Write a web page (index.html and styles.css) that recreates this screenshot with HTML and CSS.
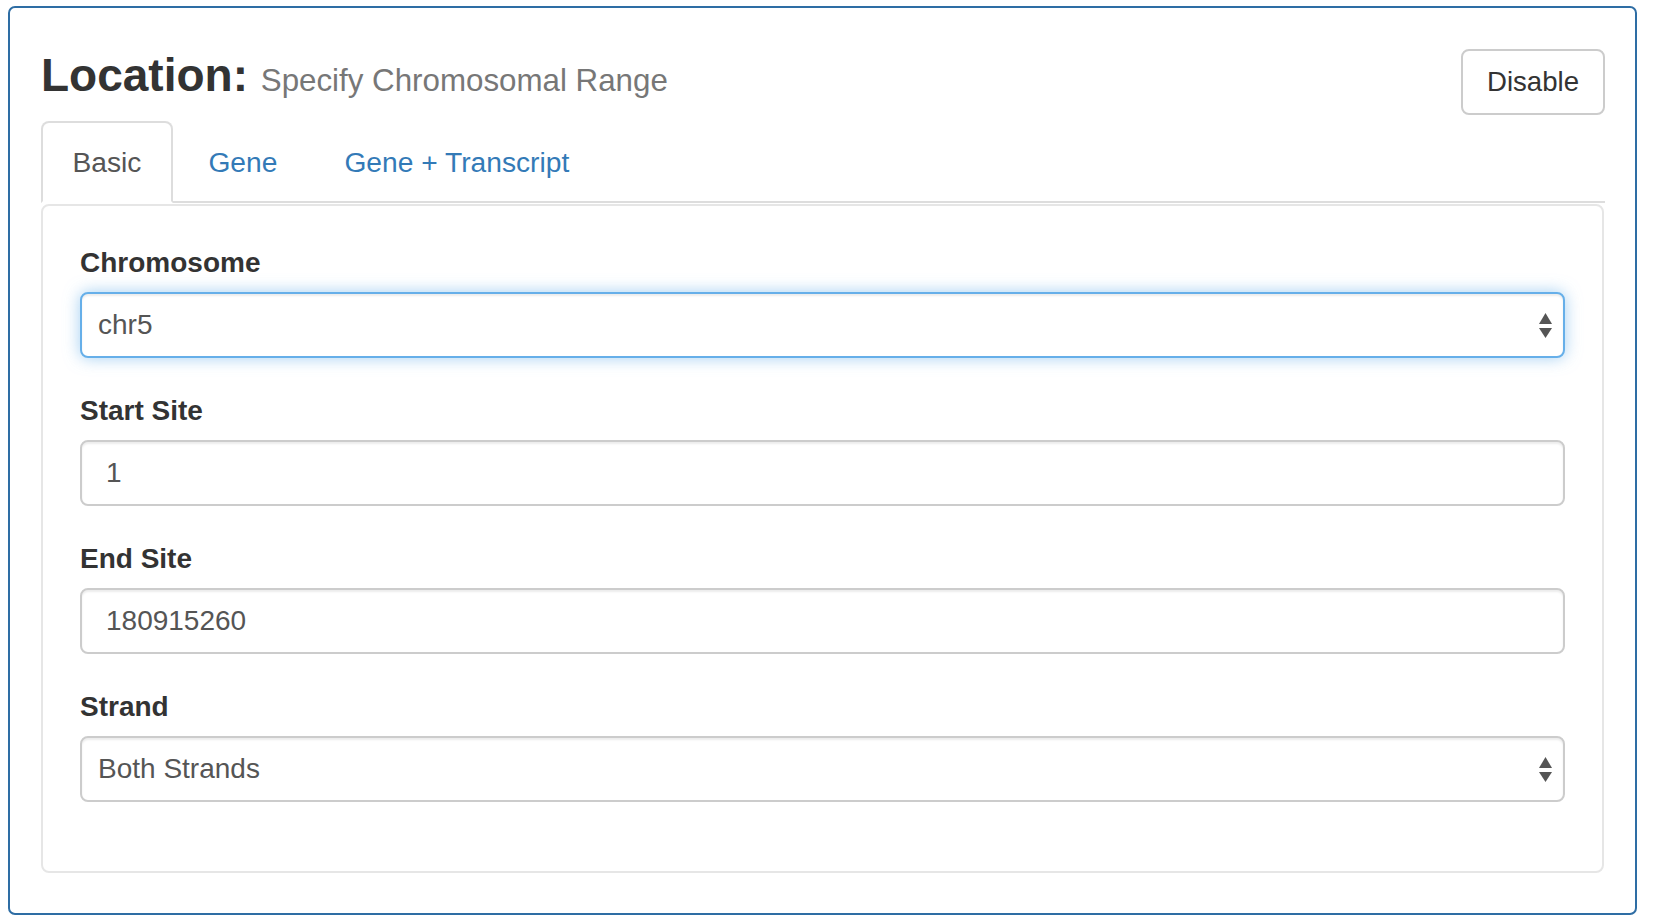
FILE: index.html
```html
<!DOCTYPE html>
<html lang="en">
<head>
<meta charset="utf-8">
<title>Location</title>
<link rel="stylesheet" href="styles.css">
</head>
<body>
<div class="card">
  <div class="header">
    <h1 class="title">Location: <small class="subtitle">Specify Chromosomal Range</small></h1>
    <button class="btn" type="button">Disable</button>
  </div>
  <ul class="tabs">
    <li class="tab active"><a href="#">Basic</a></li>
    <li class="tab"><a href="#">Gene</a></li>
    <li class="tab"><a href="#">Gene + Transcript</a></li>
  </ul>
  <div class="panel">
    <div class="group">
      <label class="label">Chromosome</label>
      <div class="select focus">
        <span class="select-text">chr5</span>
        <svg class="arrows" width="13" height="25" viewBox="0 0 13 25"><polygon points="6.5,0 13,11 0,11"/><polygon points="0,15 13,15 6.5,25"/></svg>
      </div>
    </div>
    <div class="group">
      <label class="label">Start Site</label>
      <input class="input" type="text" value="1">
    </div>
    <div class="group">
      <label class="label">End Site</label>
      <input class="input" type="text" value="180915260">
    </div>
    <div class="group">
      <label class="label">Strand</label>
      <div class="select">
        <span class="select-text">Both Strands</span>
        <svg class="arrows" width="13" height="25" viewBox="0 0 13 25"><polygon points="6.5,0 13,11 0,11"/><polygon points="0,15 13,15 6.5,25"/></svg>
      </div>
    </div>
  </div>
</div>
</body>
</html>
```
FILE: styles.css
```css
html, body {
  margin: 0;
  padding: 0;
  background: #fff;
}
body {
  font-family: "Liberation Sans", Arial, Helvetica, sans-serif;
  color: #333;
}
.card {
  box-sizing: border-box;
  width: 1629px;
  height: 909px;
  margin: 6px 0 0 8px;
  border: 2px solid #2e6da4;
  border-radius: 7px;
  padding: 41px 30px 0 31px;
}
.header {
  display: flex;
  justify-content: space-between;
  align-items: baseline;
}
.title {
  margin: 0;
  font-size: 46px;
  line-height: 1.1;
  font-weight: bold;
  color: #333;
}
.subtitle {
  font-size: 31.3px;
  font-weight: normal;
  color: #777;
}
.btn {
  box-sizing: border-box;
  height: 66px;
  padding: 0 24px;
  font-family: inherit;
  font-size: 27.6px;
  line-height: 62px;
  color: #333;
  background: #fff;
  border: 2px solid #ccc;
  border-radius: 8px;
}
.tabs {
  display: flex;
  list-style: none;
  margin: 6px 0 0 0;
  padding: 0;
  border-bottom: 2px solid #ddd;
}
.tab {
  margin-right: 4px;
  margin-bottom: -2px;
}
.tab a {
  display: block;
  padding: 19.5px 29.5px;
  font-size: 28.2px;
  line-height: 39px;
  color: #337ab7;
  text-decoration: none;
  border: 2px solid transparent;
  border-radius: 8px 8px 0 0;
}
.tab.active a {
  color: #555;
  background: #fff;
  border-color: #ddd;
  border-bottom-color: transparent;
}
.panel {
  margin: 1px 1px 0 0;
  border: 2px solid #e6e6e6;
  border-radius: 8px;
  padding: 37px 37px 36px 37px;
}
.group {
  margin-bottom: 33px;
}
.label {
  display: block;
  font-size: 28px;
  line-height: 39px;
  font-weight: bold;
  color: #333;
  margin-bottom: 10px;
}
.input,
.select {
  box-sizing: border-box;
  display: block;
  width: 100%;
  height: 66px;
  border: 2px solid #ccc;
  border-radius: 8px;
  background: #fff;
  box-shadow: inset 0 2px 2px rgba(0, 0, 0, 0.075);
  font-family: inherit;
  font-size: 28px;
  color: #555;
}
.input {
  padding: 0 24px;
  outline: none;
}
.select {
  display: flex;
  align-items: center;
  justify-content: space-between;
  padding: 0 11px 0 16px;
}
.select.focus {
  border-color: #66afe9;
  box-shadow: inset 0 2px 2px rgba(0, 0, 0, 0.075), 0 0 16px rgba(102, 175, 233, 0.6);
}
.arrows {
  fill: #555;
  display: block;
}
```
